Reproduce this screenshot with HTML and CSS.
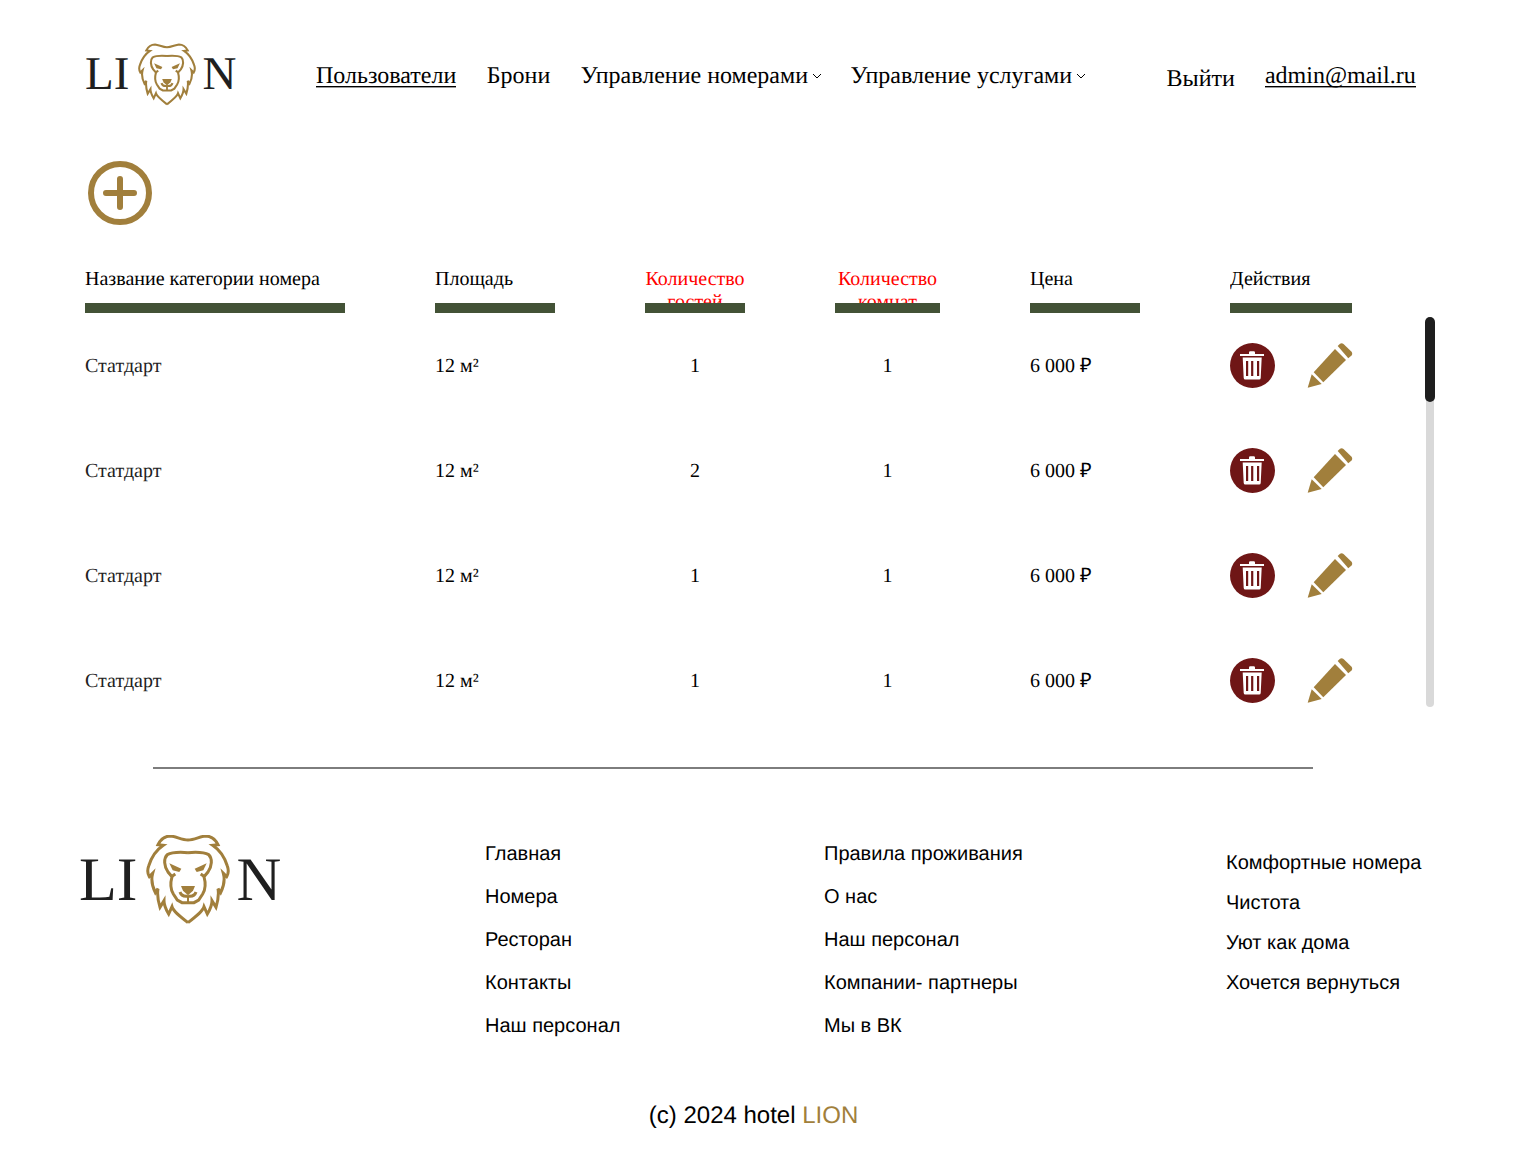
FILE: index.html
```html
<!DOCTYPE html>
<html lang="ru">
<head>
<meta charset="utf-8">
<title>LION</title>
<link rel="stylesheet" href="styles.css">
</head>
<body>
<svg class="defs" width="0" height="0" aria-hidden="true">
  <defs>
    <g id="lion-half" fill="none" stroke="#a17f3c" stroke-width="9" stroke-linejoin="miter" stroke-linecap="butt">
      <path d="M0 24C18 24 35 14 52 12C68 12 82 22 90 38L74 40C92 52 108 70 118 102C123 116 122 124 116 134L106 124C112 146 106 166 98 182L90 170C94 192 90 206 84 226L72 206C72 220 64 236 58 246L48 224C44 238 26 252 0 272"/>
      <path d="M0 62C26 60 48 60 62 68C74 80 72 102 60 120L48 134C54 156 54 170 44 186L32 204L18 212L0 212"/>
      <path d="M50 134L38 126"/>
      <path d="M0 192C12 194 20 192 24 180"/>
      <path d="M0 212L0 194" stroke-width="6"/>
      <path d="M20 110L56 94L46 115L26 120Z" fill="#a17f3c" stroke="none"/>
      <path d="M0 162L21 162L15 176L0 190Z" fill="#a17f3c" stroke="none"/>
    </g>
    <g id="lion">
      <use href="#lion-half"/>
      <use href="#lion-half" transform="scale(-1 1)"/>
    </g>
    <g id="trash">
      <circle cx="22.5" cy="22.5" r="22.5" fill="#6f1616"/>
      <path d="M10 11h24v2h-24zM19 11v-1.5q0-1.300 1.300-1.300h3.400q1.300 0 1.300 1.300v1.500z" fill="#fff"/>
      <path d="M12.700 14.500h19l-1 20.500q-.1 1.500-1.600 1.500h-13.800q-1.500 0-1.600-1.500zM16 18v15h2.200v-15zM21.100 18v15h2.200v-15zM27 18v15h2.200v-15z" fill="#fff" fill-rule="evenodd"/>
    </g>
    <g id="pencil" fill="#a17f3c">
      <path d="M4.700 31.300L14.700 41L.7 44.700Z"/>
      <path d="M6.700 29.300L28 6L39 17L16.300 39.300Z"/>
      <path d="M30.700 3L33 .8Q34.700 -.5 36.500 1L44.300 8.500Q46 10.500 44.500 12.500L41.300 15.300Z"/>
    </g>
  </defs>
</svg>

<header class="top">
  <a class="logo logo-small">
    <span>LI</span>
    <svg class="lion-small" viewBox="-126 9 252 267"><use href="#lion"/></svg>
    <span>N</span>
  </a>
  <nav class="nav">
    <a class="nav-link underlined">Пользователи</a>
    <a class="nav-link">Брони</a>
    <a class="nav-link dropdown">Управление номерами<svg class="chev" viewBox="0 0 10 6"><path d="M1 1l4 4 4-4"/></svg></a>
    <a class="nav-link dropdown">Управление услугами<svg class="chev" viewBox="0 0 10 6"><path d="M1 1l4 4 4-4"/></svg></a>
  </nav>
  <div class="account">
    <a class="nav-link logout">Выйти</a>
    <a class="nav-link underlined">admin@mail.ru</a>
  </div>
</header>

<main class="content">
  <button class="add" aria-label="Добавить">
    <svg viewBox="0 0 64 64" width="64" height="64">
      <circle cx="32" cy="32" r="29" fill="none" stroke="#a17f3c" stroke-width="6"/>
      <path d="M32 18v28M18 32h28" stroke="#a17f3c" stroke-width="6" stroke-linecap="round"/>
    </svg>
  </button>

  <div class="grid head">
    <div class="th w1">Название категории номера</div>
    <div class="th w2">Площадь</div>
    <div class="th w3 warn">Количество гостей</div>
    <div class="th w4 warn">Количество комнат</div>
    <div class="th w5">Цена</div>
    <div class="th w6">Действия</div>
  </div>

  <div class="scroller">
    <div class="grid row"><div class="w1 name">Статдарт</div><div class="w2">12 м²</div><div class="w3 mid">1</div><div class="w4 mid">1</div><div class="w5">6 000 ₽</div><div class="w6 actions"><svg class="ic" viewBox="0 0 45 45"><use href="#trash"/></svg><svg class="ic pen" viewBox="0 0 46 46"><use href="#pencil"/></svg></div></div>
    <div class="grid row"><div class="w1 name">Статдарт</div><div class="w2">12 м²</div><div class="w3 mid">2</div><div class="w4 mid">1</div><div class="w5">6 000 ₽</div><div class="w6 actions"><svg class="ic" viewBox="0 0 45 45"><use href="#trash"/></svg><svg class="ic pen" viewBox="0 0 46 46"><use href="#pencil"/></svg></div></div>
    <div class="grid row"><div class="w1 name">Статдарт</div><div class="w2">12 м²</div><div class="w3 mid">1</div><div class="w4 mid">1</div><div class="w5">6 000 ₽</div><div class="w6 actions"><svg class="ic" viewBox="0 0 45 45"><use href="#trash"/></svg><svg class="ic pen" viewBox="0 0 46 46"><use href="#pencil"/></svg></div></div>
    <div class="grid row"><div class="w1 name">Статдарт</div><div class="w2">12 м²</div><div class="w3 mid">1</div><div class="w4 mid">1</div><div class="w5">6 000 ₽</div><div class="w6 actions"><svg class="ic" viewBox="0 0 45 45"><use href="#trash"/></svg><svg class="ic pen" viewBox="0 0 46 46"><use href="#pencil"/></svg></div></div>
    <div class="track"><div class="thumb"></div></div>
  </div>
</main>

<hr class="rule">

<footer class="foot">
  <a class="logo logo-big">
    <span>LI</span>
    <svg class="lion-big" viewBox="-126 9 252 267"><use href="#lion"/></svg>
    <span>N</span>
  </a>
  <ul class="links col-a">
    <li>Главная</li><li>Номера</li><li>Ресторан</li><li>Контакты</li><li>Наш персонал</li>
  </ul>
  <ul class="links col-b">
    <li>Правила проживания</li><li>О нас</li><li>Наш персонал</li><li>Компании- партнеры</li><li>Мы в ВК</li>
  </ul>
  <ul class="links col-c">
    <li>Комфортные номера</li><li>Чистота</li><li>Уют как дома</li><li>Хочется вернуться</li>
  </ul>
</footer>
<p class="copy">(c) 2024 hotel <span class="gold">LION</span></p>
</body>
</html>
```
FILE: styles.css
```css
* { box-sizing: border-box; }
html, body { margin: 0; padding: 0; background: #fff; }
body { height: 1173px; overflow: hidden; color: #000; font-family: "Liberation Serif", serif; text-rendering: geometricPrecision; }
.defs { position: absolute; }

/* header */
.top { display: flex; align-items: flex-start; height: 161px; padding: 43px 0 0 85px; }
.logo { display: flex; color: #1f1f1f; font-family: "Liberation Serif", serif; }
.logo-small { width: 151px; font-size: 47px; line-height: 63px; align-items: center; margin-right: 80px; }
.lion-small { width: 58px; height: 63px; margin: 0 6px 0 9px; flex: none; }
.nav { display: flex; gap: 30.5px; height: 63px; align-items: flex-start; padding-top: 19px; }
.nav-link { font-size: 24px; line-height: 28px; color: #000; white-space: nowrap; }
.underlined { border-bottom: 1px solid #000; box-shadow: 0 1px 0 #999; height: 25px; }
.dropdown { display: flex; align-items: center; margin-right: -2px; }
.chev { width: 10px; height: 6px; margin-left: 4px; fill: none; stroke: #000; stroke-width: 1; }
.account { display: flex; gap: 30px; margin-left: 82.5px; padding-top: 19px; }
.logout { margin-top: 3px; }

/* table */
.content { padding-left: 85px; width: 1435px; }
.add { display: block; padding: 0; margin: 0 0 0 3px; border: 0; background: none; width: 64px; height: 64px; }
.add svg { display: block; }
.grid { display: grid; grid-template-columns: 350px 210px 190px 195px 200px 1fr; }
.head { margin-top: 43px; }
.th { height: 45px; overflow: hidden; font-size: 20px; line-height: 23px; border-bottom: 10px solid #435236; }
.warn { color: #f00; text-align: center; }
.w1 { width: 260px; }
.w2 { width: 120px; }
.w3 { width: 100px; }
.w4 { width: 105px; }
.w5 { width: 110px; }
.w6 { width: 122px; }
.scroller { position: relative; height: 390px; margin-top: 4px; overflow: hidden; }
.track { position: absolute; top: 0; right: 1px; bottom: 0; width: 8px; background: #d9d9d9; border-radius: 4px; }
.thumb { width: 10px; height: 85px; margin-left: -1px; background: #1e1e1e; border-radius: 5px; }
.row { height: 97px; margin-bottom: 8px; align-items: center; font-size: 20px; line-height: 23px; }
.row:last-of-type { margin-bottom: 0; }
.row > div { padding-top: 2px; }
.row > .actions { padding-top: 0; }
.name { color: #222; }
.mid { text-align: center; }
.actions { display: flex; justify-content: space-between; }
.ic { width: 45px; height: 45px; display: block; }
.pen { width: 46px; height: 46px; margin-right: -1px; }

/* footer */
.rule { width: 1160px; height: 2px; margin: 60px 0 0 153px; border: 0; background: #7d7d7d; }
.foot { display: flex; align-items: flex-start; height: 306px; padding: 0 0 0 79px; }
.logo-big { width: 406px; font-size: 62px; line-height: 89px; margin-top: 64px; align-items: center; }
.logo-big span { padding-top: 3px; }
.lion-big { width: 84px; height: 89px; margin: 0 7px 0 8px; flex: none; }
.links { list-style: none; margin: 0; padding: 0; font-family: "Liberation Sans", sans-serif; font-size: 20px; line-height: 23px; }
.col-a { width: 339px; margin-top: 74px; display: flex; flex-direction: column; gap: 20px; }
.col-b { width: 402px; margin-top: 74px; display: flex; flex-direction: column; gap: 20px; }
.col-c { margin-top: 83px; display: flex; flex-direction: column; gap: 17px; }
.copy { margin: 0; width: 1507px; text-align: center; font-family: "Liberation Sans", sans-serif; font-size: 24px; line-height: 28px; margin-top: 27px; }
.gold { color: #a17f3c; }
```
